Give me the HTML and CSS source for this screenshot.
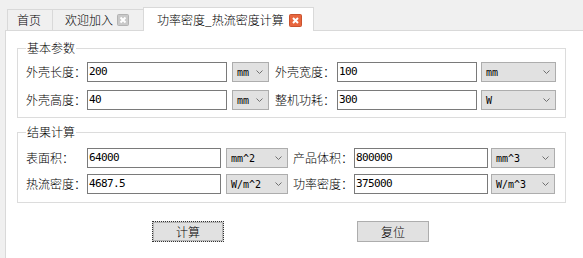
FILE: index.html
```html
<!DOCTYPE html>
<html lang="zh">
<head>
<meta charset="utf-8">
<title>功率密度_热流密度计算</title>
<link rel="stylesheet" href="styles.css">
</head>
<body>
<div class="tabbar">
  <div class="tab t1">首页</div>
  <div class="tab t2">欢迎加入<svg class="close" width="12" height="12" viewBox="0 0 12 12"><rect x="0.5" y="0.5" width="11" height="11" rx="1" fill="#c9c9c9" stroke="#b3b3b3"/><path d="M3.5 3.5 L8.5 8.5 M8.5 3.5 L3.5 8.5" stroke="#fff" stroke-width="2"/></svg></div>
  <div class="tab active">功率密度_热流密度计算<svg class="close" width="13" height="13" viewBox="0 0 13 13"><rect x="0.5" y="0.5" width="12" height="12" rx="1" fill="#e8663e" stroke="#c9532f"/><path d="M4 4 L9 9 M9 4 L4 9" stroke="#fff" stroke-width="2"/></svg></div>
</div>
<div class="panel">
  <fieldset class="group g1">
    <legend>基本参数</legend>
    <div class="row">
      <span class="lbl">外壳长度：</span>
      <span class="input w1">200</span>
      <span class="combo c1a">mm<svg class="chev" width="7" height="4" viewBox="0 0 7 4"><polyline points="0.5,0.5 3.5,3.5 6.5,0.5" fill="none" stroke="#707070"/></svg></span>
      <span class="lbl lbl2a">外壳宽度：</span>
      <span class="input w1">100</span>
      <span class="combo c1b">mm<svg class="chev" width="7" height="4" viewBox="0 0 7 4"><polyline points="0.5,0.5 3.5,3.5 6.5,0.5" fill="none" stroke="#707070"/></svg></span>
    </div>
    <div class="row">
      <span class="lbl">外壳高度：</span>
      <span class="input w1">40</span>
      <span class="combo c1a">mm<svg class="chev" width="7" height="4" viewBox="0 0 7 4"><polyline points="0.5,0.5 3.5,3.5 6.5,0.5" fill="none" stroke="#707070"/></svg></span>
      <span class="lbl lbl2a">整机功耗：</span>
      <span class="input w1">300</span>
      <span class="combo c1b">W<svg class="chev" width="7" height="4" viewBox="0 0 7 4"><polyline points="0.5,0.5 3.5,3.5 6.5,0.5" fill="none" stroke="#707070"/></svg></span>
    </div>
  </fieldset>
  <fieldset class="group g2">
    <legend>结果计算</legend>
    <div class="row">
      <span class="lbl">表面积：</span>
      <span class="input w2">64000</span>
      <span class="combo c2a">mm^2<svg class="chev" width="7" height="4" viewBox="0 0 7 4"><polyline points="0.5,0.5 3.5,3.5 6.5,0.5" fill="none" stroke="#707070"/></svg></span>
      <span class="lbl lbl2b">产品体积：</span>
      <span class="input w2">800000</span>
      <span class="combo c2b">mm^3<svg class="chev" width="7" height="4" viewBox="0 0 7 4"><polyline points="0.5,0.5 3.5,3.5 6.5,0.5" fill="none" stroke="#707070"/></svg></span>
    </div>
    <div class="row">
      <span class="lbl">热流密度：</span>
      <span class="input w2">4687.5</span>
      <span class="combo c2a">W/m^2<svg class="chev" width="7" height="4" viewBox="0 0 7 4"><polyline points="0.5,0.5 3.5,3.5 6.5,0.5" fill="none" stroke="#707070"/></svg></span>
      <span class="lbl lbl2b">功率密度：</span>
      <span class="input w2">375000</span>
      <span class="combo c2b">W/m^3<svg class="chev" width="7" height="4" viewBox="0 0 7 4"><polyline points="0.5,0.5 3.5,3.5 6.5,0.5" fill="none" stroke="#707070"/></svg></span>
    </div>
  </fieldset>
  <div class="buttons">
    <span class="btn focus">计算</span>
    <span class="btn">复位</span>
  </div>
</div>
</body>
</html>
```
FILE: styles.css
```css
html, body {
  margin: 0;
  height: 258px;
  overflow: hidden;
}
body {
  background: #f0f0f0;
  font-family: "Noto Sans CJK SC", "Liberation Sans", sans-serif;
  font-size: 12px;
  font-weight: 300;
  color: #000;
}
.tabbar {
  height: 30px;
  display: flex;
  align-items: flex-end;
  padding-left: 7px;
  position: relative;
  z-index: 1;
}
.tab {
  box-sizing: border-box;
  height: 21px;
  border: 1px solid #d9d9d9;
  border-bottom: none;
  display: flex;
  align-items: center;
  line-height: 12px;
  background: #f0f0f0;
}
.t1 {
  width: 46px;
  padding-left: 9px;
}
.t2 {
  width: 90px;
  border-left: none;
  border-right: none;
  padding-left: 12px;
}
.close {
  display: block;
  margin-left: 4px;
}
.active {
  height: 24px;
  margin-bottom: -1px;
  background: #fff;
  padding-left: 13px;
  padding-top: 1px;
  width: 171px;
}
.active .close {
  margin-left: 5px;
}
.panel {
  box-sizing: border-box;
  height: 228px;
  margin-left: 5px;
  border-left: 1px solid #d9d9d9;
  border-top: 1px solid #d9d9d9;
  background: #fff;
  padding: 10px 17px 0 11px;
}
.group {
  margin: 0;
  min-width: 0;
  border: 1px solid #dcdcdc;
  padding: 7px 9px 7px 8px;
}
.group legend {
  padding: 0 1px;
  line-height: 14px;
}
.g2 {
  margin-top: 7px;
  padding-top: 9px;
  padding-bottom: 8px;
}
.row {
  display: flex;
  align-items: center;
  height: 20px;
}
.g1 .row + .row {
  margin-top: 8px;
}
.g2 .row + .row {
  margin-top: 6px;
}
.lbl {
  width: 61px;
  flex: none;
  white-space: nowrap;
  line-height: 20px;
}
.lbl2a {
  width: 62px;
  margin-left: 6px;
}
.lbl2b {
  margin-left: 5px;
}
.input {
  box-sizing: border-box;
  height: 20px;
  flex: none;
  border: 1px solid #7a7a7a;
  background: #fff;
  padding-left: 1px;
  font-family: "DejaVu Sans Mono", "Liberation Mono", monospace;
  font-size: 11px;
  font-weight: normal;
  letter-spacing: -0.6px;
  line-height: 18px;
}
.w1 { width: 140px; }
.w2 { width: 134px; }
.combo {
  box-sizing: border-box;
  height: 20px;
  flex: none;
  border: 1px solid #adadad;
  background: #e1e1e1;
  display: flex;
  align-items: center;
  justify-content: space-between;
  padding: 0 5px 0 4px;
  font-family: "DejaVu Sans Mono", "Liberation Mono", monospace;
  font-size: 10px;
  font-weight: normal;
}
.chev { display: block; }
.c1a { width: 37px; margin-left: 5px; }
.c1b { width: 75px; margin-left: 4px; }
.c2a { width: 62px; margin-left: 5px; }
.c2b { width: 64px; margin-left: 3px; }
.buttons {
  display: flex;
  gap: 133px;
  margin-top: 18px;
  padding-left: 135px;
}
.btn {
  box-sizing: border-box;
  width: 72px;
  height: 21px;
  border: 1px solid #adadad;
  background: #e1e1e1;
  display: flex;
  align-items: center;
  justify-content: center;
  line-height: 12px;
}
.btn.focus {
  border: 1px dotted #333;
  box-shadow: inset 0 0 0 1px #b5b5b5;
}
```
